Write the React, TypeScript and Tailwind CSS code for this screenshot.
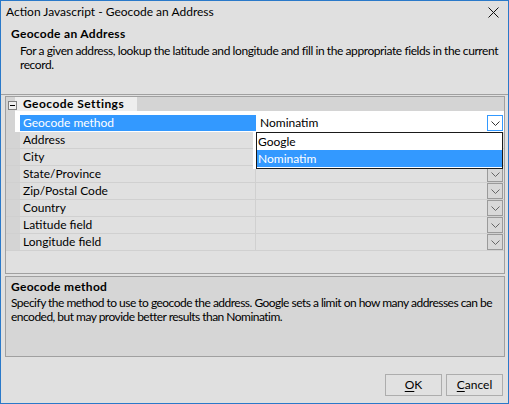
import { ReactNode } from "react";

const rows = [
  "Address",
  "City",
  "State/Province",
  "Zip/Postal Code",
  "Country",
  "Latitude field",
  "Longitude field",
];

function Chevron({ color = "#555" }: { color?: string }) {
  return (
    <svg width="9" height="5" viewBox="0 0 9 5" className="block">
      <path d="M0.5 0.5 L4.5 4.5 L8.5 0.5" fill="none" stroke={color} strokeWidth="1" />
    </svg>
  );
}

function DropButton({ active }: { active?: boolean }) {
  return (
    <div
      className={
        active
          ? "w-[16px] h-[16px] border border-[#3399ff] bg-white flex items-center justify-center"
          : "w-[16px] h-[16px] border border-[#9a9a9a] bg-[#d8d8d8] flex items-center justify-center"
      }
    >
      <Chevron color={active ? "#333" : "#666"} />
    </div>
  );
}

function Row({ label, children }: { label: string; children?: ReactNode }) {
  return (
    <div className="flex h-[17px] border-b border-[#d0d0d0]">
      <div className="w-[14px] bg-[#d4d4d4]" />
      <div className="w-[236px] pl-[3px] leading-[16px] border-r border-[#d0d0d0] truncate">{label}</div>
      <div className="flex-1 flex justify-end pr-[1px]">{children}</div>
    </div>
  );
}

function Button({ hot, rest }: { hot: string; rest: string }) {
  return (
    <div className="w-[57px] h-[22px] border border-[#adadad] bg-[#e1e1e1] flex items-center justify-center leading-[16px]">
      <span>
        <span className="underline underline-offset-2">{hot}</span>
        {rest}
      </span>
    </div>
  );
}

export default function App() {
  return (
    <div className="w-[509px] h-[404px] border border-[#2a79c9] bg-[#e0e0e0] flex flex-col font-['Lato',sans-serif] text-[12px] text-black overflow-hidden">
      {/* title + header */}
      <div className="h-[94px] border-b border-[#a0a0a0] shrink-0">
        <div className="flex justify-between items-start pt-[3px] pl-[5px] pr-[9px] h-[24px]">
          <span className="leading-[16px]">Action Javascript - Geocode an Address</span>
          <svg width="11" height="11" viewBox="0 0 11 11" className="mt-[3px]">
            <path d="M0.5 0.5 L10.5 10.5 M10.5 0.5 L0.5 10.5" stroke="#111" strokeWidth="1" />
          </svg>
        </div>
        <div className="pl-[10px] font-bold leading-[16px] tracking-[0.3px] mt-[1px]">Geocode an Address</div>
        <div className="pl-[19px] leading-[14px] tracking-[-0.42px] mt-[2px]">
          For a given address, lookup the latitude and longitude and fill in the appropriate fields in the current record.
        </div>
      </div>

      <div className="flex-1 flex flex-col pl-[4px] pr-[3px] pt-[1px]">
        {/* property grid */}
        <div className="relative h-[178px] border border-[#a0a0a0] bg-[#e0e0e0]">
          <div className="flex h-[14px] bg-[#d4d4d4]">
            <div className="w-[9px] relative">
              <div className="absolute left-[2px] top-[4px] w-[9px] h-[9px] border border-[#808080] bg-[#f0f0f0] flex items-center justify-center">
                <div className="w-[5px] h-[1px] bg-black" />
              </div>
            </div>
            <div className="w-[122px] bg-[#eeeeee] pl-[8px] font-bold leading-[14px] tracking-[0.45px]">Geocode Settings</div>
          </div>

          {/* selected row */}
          <div className="flex h-[21px] bg-white">
            <div className="w-[9px] bg-[#d4d4d4]" />
            <div className="w-[5px]" />
            <div className="w-[236px] pt-[4px]">
              <div className="h-[16px] bg-[#3399ff] text-white pl-[3px] leading-[16px]">Geocode method</div>
            </div>
            <div className="w-[1px]" />
            <div className="flex-1 flex items-start justify-between pt-[4px] pl-[3px] pr-[1px]">
              <span className="leading-[16px]">Nominatim</span>
              <DropButton active />
            </div>
          </div>

          {rows.map((r, i) => (
            <Row key={r} label={r}>
              {i > 1 && <DropButton />}
            </Row>
          ))}

          {/* open dropdown list */}
          <div className="absolute left-[247px] top-[35px] w-[250px] h-[37px] bg-white pl-[3px]">
            <div className="h-full border border-[#1a1a1a] bg-white">
              <div className="h-[17px] pl-[1px] leading-[17px]">Google</div>
              <div className="h-[17px] pl-[1px] leading-[17px] bg-[#3399ff] text-white">Nominatim</div>
            </div>
          </div>
        </div>

        {/* description */}
        <div className="mt-[2px] h-[81px] border border-[#a0a0a0] bg-[#d6d6d6] pl-[5px] pr-[4px] pt-[2px]">
          <div className="font-bold leading-[16px] tracking-[0.3px]">Geocode method</div>
          <div className="leading-[14px] tracking-[-0.52px] mt-[1px]">
            Specify the method to use to geocode the address. Google sets a limit on how many addresses can be encoded, but may provide better results than Nominatim.
          </div>
        </div>

        {/* buttons */}
        <div className="mt-[17px] flex justify-end gap-[4px] pr-[2px]">
          <Button hot="O" rest="K" />
          <Button hot="C" rest="ancel" />
        </div>
      </div>
    </div>
  );
}
